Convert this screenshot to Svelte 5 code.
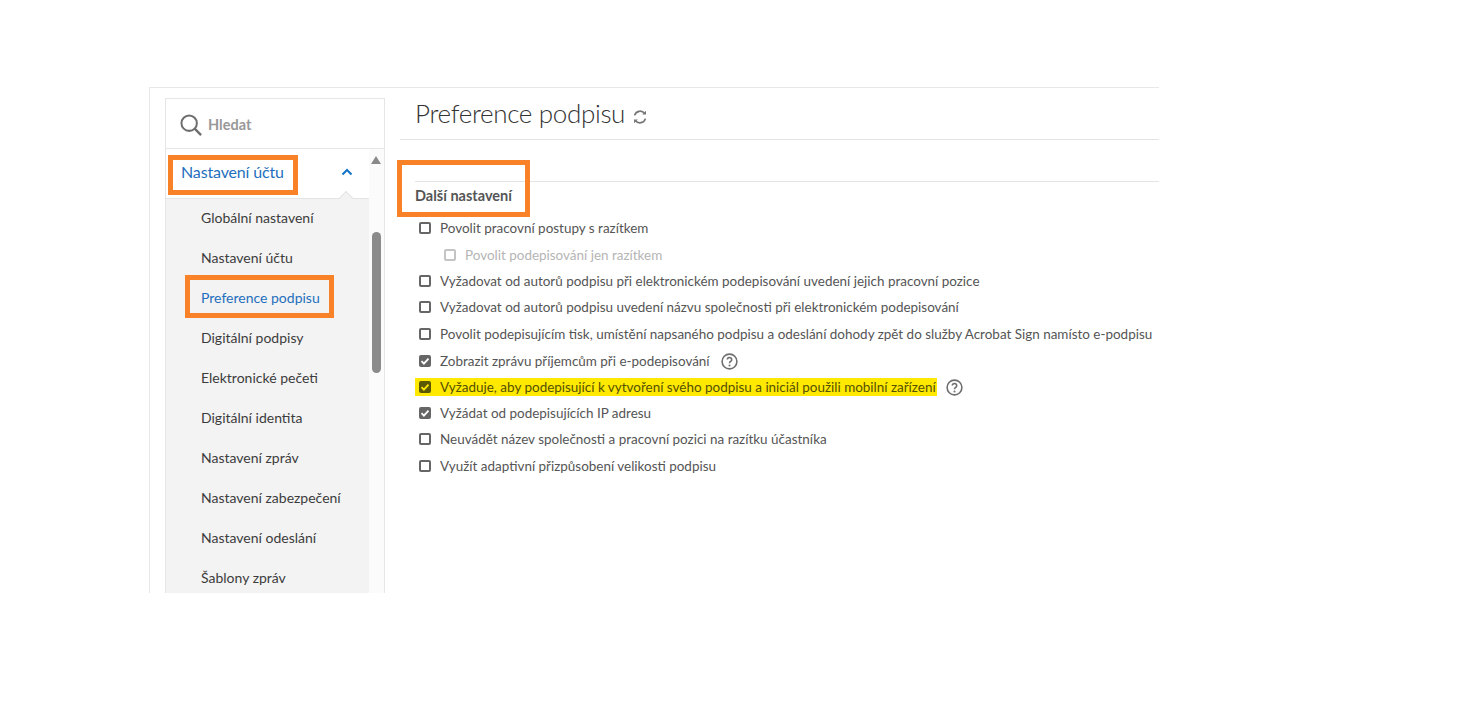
<script>
  const menu = [
    { label: 'Globální nastavení' },
    { label: 'Nastavení účtu' },
    { label: 'Preference podpisu', active: true },
    { label: 'Digitální podpisy' },
    { label: 'Elektronické pečeti' },
    { label: 'Digitální identita' },
    { label: 'Nastavení zpráv' },
    { label: 'Nastavení zabezpečení' },
    { label: 'Nastavení odeslání' },
    { label: 'Šablony zpráv' }
  ];
  const options = [
    { label: 'Povolit pracovní postupy s razítkem', gap: 1 },
    { label: 'Povolit podepisování jen razítkem', nested: true, gap: 0 },
    { label: 'Vyžadovat od autorů podpisu při elektronickém podepisování uvedení jejich pracovní pozice', gap: 0 },
    { label: 'Vyžadovat od autorů podpisu uvedení názvu společnosti při elektronickém podepisování', gap: 1 },
    { label: 'Povolit podepisujícím tisk, umístění napsaného podpisu a odeslání dohody zpět do služby Acrobat Sign namísto e-podpisu', gap: 1 },
    { label: 'Zobrazit zprávu příjemcům při e-podepisování', checked: true, help: true, gap: 0 },
    { label: 'Vyžaduje, aby podepisující k vytvoření svého podpisu a iniciál použili mobilní zařízení', checked: true, help: true, mark: true, gap: 0 },
    { label: 'Vyžádat od podepisujících IP adresu', checked: true, gap: 0 },
    { label: 'Neuvádět název společnosti a pracovní pozici na razítku účastníka', gap: 1 },
    { label: 'Využít adaptivní přizpůsobení velikosti podpisu', gap: 0 }
  ];
</script>

<div class="frame">
  <aside class="side">
    <div class="search">
      <svg width="22" height="22" viewBox="0 0 24 24" fill="none" stroke="#6e6e6e" stroke-width="2.2">
        <circle cx="10" cy="10" r="8.4" />
        <path d="M16 16l7 7" stroke-width="2.6" />
      </svg>
      <span>Hledat</span>
    </div>
    <div class="nav">
      <div class="tree">
        <div class="head">
          <span class="head-label">Nastavení účtu</span>
          <svg class="chev" width="12" height="8" viewBox="0 0 12 8" fill="none" stroke="#1473c6" stroke-width="2">
            <path d="M1.5 6.5L6 2l4.5 4.5" />
          </svg>
          <span class="box box-head"></span>
          <span class="notch"></span>
        </div>
        <ul>
          {#each menu as item}
            <li class:active={item.active}>
              {item.label}
              {#if item.active}<span class="box box-item"></span>{/if}
            </li>
          {/each}
        </ul>
      </div>
      <div class="bar">
        <span class="arrow"></span>
        <span class="thumb"></span>
      </div>
    </div>
  </aside>

  <main class="content">
    <h1>Preference podpisu
      <svg width="16" height="16" viewBox="0 0 16 16" fill="none" stroke="#777" stroke-width="1.7">
        <path d="M2.6 6.4A5.6 5.6 0 0 1 12.6 4.6" />
        <path d="M13.4 9.6A5.6 5.6 0 0 1 3.4 11.4" />
        <path d="M14 1.8v3.8h-3.8z" fill="#777" stroke="none" />
        <path d="M2 14.2v-3.8h3.8z" fill="#777" stroke="none" />
      </svg>
    </h1>
    <section>
      <h2>Další nastavení <span class="box box-title"></span></h2>
      <div class="opts">
        {#each options as o}
          <div class="opt" class:nested={o.nested} style="margin-bottom: {o.gap}px">
            <span class="wrap" class:mark={o.mark}>
              <span class="cb" class:on={o.checked}>
                {#if o.checked}
                  <svg width="10" height="10" viewBox="0 0 10 10" fill="none" stroke="#fff" stroke-width="1.8">
                    <path d="M1.5 5.2l2.4 2.4 4.6-5" />
                  </svg>
                {/if}
              </span>
              <span>{o.label}</span>
            </span>
            {#if o.help}
              <svg class="help" width="17" height="17" viewBox="0 0 17 17" fill="none">
                <circle cx="8.5" cy="8.5" r="7.4" stroke="#6e6e6e" stroke-width="1.6" />
                <path d="M6.3 6.6a2.2 2.1 0 1 1 3.4 1.8c-.8.5-1.2.9-1.2 1.8" stroke="#6e6e6e" stroke-width="1.6" />
                <circle cx="8.5" cy="12.4" r="1" fill="#6e6e6e" />
              </svg>
            {/if}
          </div>
        {/each}
      </div>
    </section>
  </main>
</div>

<style>
  :global(body) {
    margin: 0;
    background: #fff;
  }
  .frame {
    display: flex;
    box-sizing: border-box;
    margin: 87px 0 0 149px;
    width: 1010px;
    height: 506px;
    overflow: hidden;
    border-top: 1px solid #e8e8e8;
    border-left: 1px solid #e8e8e8;
    font-family: Lato, "Noto Sans", sans-serif;
    color: #555;
  }
  .side {
    flex: none;
    box-sizing: border-box;
    width: 220px;
    height: 600px;
    margin: 10px 0 0 15px;
    border: 1px solid #e6e6e6;
    display: flex;
    flex-direction: column;
  }
  .search {
    flex: none;
    box-sizing: border-box;
    height: 50px;
    display: flex;
    align-items: center;
    gap: 6px;
    padding: 2px 0 0 14px;
    border-bottom: 1px solid #e6e6e6;
    font-size: 14.5px;
    font-weight: 700;
    color: #989898;
  }
  .nav {
    flex: 1;
    display: flex;
  }
  .tree {
    width: 203px;
  }
  .head {
    position: relative;
    box-sizing: border-box;
    height: 50px;
    display: flex;
    align-items: center;
    justify-content: space-between;
    padding: 0 16px 4px 15px;
    border-bottom: 1px solid #e4e4e4;
  }
  .head-label {
    font-size: 16px;
    letter-spacing: -0.15px;
    color: #1f6fbd;
  }
  .notch {
    position: absolute;
    right: 18px;
    bottom: -1px;
    width: 9px;
    height: 9px;
    background: #f3f3f3;
    border-top: 1px solid #e4e4e4;
    border-left: 1px solid #e4e4e4;
    transform: translateY(-1px) rotate(45deg);
    margin-bottom: -5px;
    z-index: 1;
  }
  ul {
    list-style: none;
    margin: 0;
    padding: 0;
    background: #f3f3f3;
    height: 500px;
  }
  li {
    position: relative;
    box-sizing: border-box;
    height: 40px;
    line-height: 37px;
    padding-left: 35px;
    font-size: 14px;
    color: #3c3c3c;
  }
  li.active {
    color: #1f6fbd;
  }
  .bar {
    position: relative;
    flex: 1;
    background: #fbfbfb;
  }
  .arrow {
    position: absolute;
    left: 2px;
    top: 7px;
    border-left: 5px solid transparent;
    border-right: 5px solid transparent;
    border-bottom: 8px solid #8a8a8a;
  }
  .thumb {
    position: absolute;
    left: 3px;
    top: 83px;
    width: 9px;
    height: 141px;
    border-radius: 5px;
    background: #8b8b8b;
  }
  .box {
    position: absolute;
    box-sizing: border-box;
    border: 5px solid #f98128;
    pointer-events: none;
    z-index: 2;
  }
  .box-head {
    left: 2px;
    top: 6px;
    width: 130px;
    height: 40px;
  }
  .box-item {
    left: 19px;
    top: -4px;
    width: 149px;
    height: 43px;
  }
  .content {
    flex: 1;
    min-width: 0;
    margin-left: 15px;
  }
  h1 {
    box-sizing: border-box;
    height: 52px;
    margin: 0;
    padding: 9px 0 0 15px;
    border-bottom: 1px solid #e4e4e4;
    font-size: 26px;
    letter-spacing: -0.34px;
    font-weight: 300;
    line-height: 33px;
    color: #333;
    white-space: nowrap;
  }
  h1 svg {
    vertical-align: -2px;
  }
  section {
    margin: 41px 0 0 15px;
    border-top: 1px solid #e4e4e4;
  }
  h2 {
    position: relative;
    margin: 0;
    height: 33px;
    line-height: 27px;
    font-size: 14.5px;
    font-weight: 700;
    color: #555;
  }
  .box-title {
    left: -18px;
    top: -22px;
    width: 133px;
    height: 57px;
  }
  .opt {
    display: flex;
    align-items: center;
    gap: 9px;
    height: 26px;
    font-size: 13.46px;
    white-space: nowrap;
  }
  .wrap {
    display: inline-flex;
    align-items: center;
    gap: 9px;
    height: 18px;
    padding-left: 4px;
  }
  .wrap.mark {
    background: #ffe900;
    padding-right: 1px;
    margin-right: -2px;
    color: #545000;
  }
  .help {
    margin-left: 2px;
  }
  .nested {
    padding-left: 25px;
    color: #b5b5b5;
  }
  .nested .cb {
    border-color: #c4c4c4;
  }
  .cb {
    flex: none;
    box-sizing: border-box;
    width: 12px;
    height: 12px;
    border: 2px solid #666;
    border-radius: 2px;
    background: #fff;
    display: inline-flex;
    align-items: center;
    justify-content: center;
  }
  .cb.on {
    background: #666;
  }
  .cb.on svg {
    flex: none;
  }
  .mark .cb.on {
    background: #5c5800;
    border-color: #5c5800;
  }
  .mark .cb.on svg {
    stroke: #ffe900;
  }
</style>
